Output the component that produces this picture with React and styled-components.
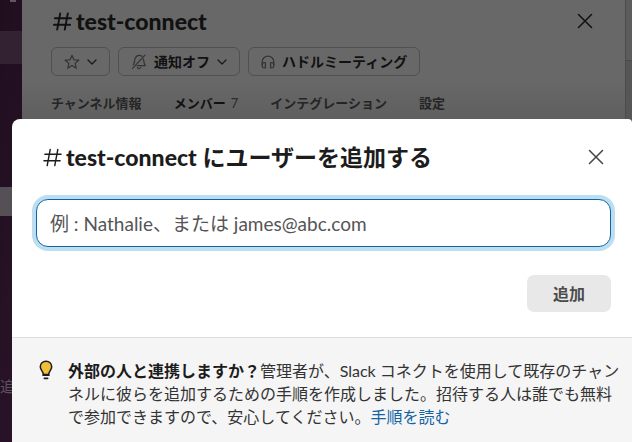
import styled, { createGlobalStyle } from "styled-components"

const tabs = [
  { label: "チャンネル情報" },
  { label: "メンバー", count: 7, active: true },
  { label: "インテグレーション" },
  { label: "設定" },
]

function HashIcon({ size, weight }) {
  return (
    <svg width={size} height={size} viewBox="0 0 20 20" aria-hidden="true">
      <path
        d="M7.6 1.5 4.4 18.5M15.6 1.5 12.4 18.5M2 6.6H19M1 13.4H18"
        fill="none"
        stroke="currentColor"
        strokeWidth={weight}
        strokeLinecap="round"
      />
    </svg>
  )
}

function CloseIcon() {
  return (
    <svg width="16" height="16" viewBox="0 0 16 16" aria-hidden="true">
      <path
        d="M1.5 1.5 14.5 14.5M14.5 1.5 1.5 14.5"
        fill="none"
        stroke="currentColor"
        strokeWidth="1.5"
        strokeLinecap="round"
      />
    </svg>
  )
}

function ChevronIcon() {
  return (
    <svg width="10" height="6" viewBox="0 0 10 6" aria-hidden="true">
      <path
        d="M1 1 5 5 9 1"
        fill="none"
        stroke="#1c1c1c"
        strokeWidth="1.4"
        strokeLinecap="round"
        strokeLinejoin="round"
      />
    </svg>
  )
}

function StarIcon() {
  return (
    <svg width="16" height="16" viewBox="0 0 16 16" aria-hidden="true">
      <path
        d="M8 1.3 9.9 5.8 14.8 6.2 11.1 9.4 12.3 14.3 8 11.6 3.7 14.3 4.9 9.4 1.2 6.2 6.1 5.8Z"
        fill="none"
        stroke="currentColor"
        strokeWidth="1.2"
        strokeLinejoin="round"
      />
    </svg>
  )
}

function BellOffIcon() {
  return (
    <svg width="16" height="16" viewBox="0 0 16 16" aria-hidden="true">
      <g
        fill="none"
        stroke="currentColor"
        strokeWidth="1.2"
        strokeLinecap="round"
        strokeLinejoin="round"
      >
        <path d="M1.6 14.4 14 1.2" />
        <path d="M2.2 10.9C3.6 9.6 3.2 7.6 3.8 5.4 4.5 2.8 6.3 1.4 8.3 1.4 9.4 1.4 10.3 1.8 11 2.4" />
        <path d="M12.4 5.1C13 7.4 12.6 9.2 14.3 11.6H6.2" />
        <path d="M6.4 13.6C6.8 14.9 9.2 14.9 9.8 13.4" />
      </g>
    </svg>
  )
}

function HeadphonesIcon() {
  return (
    <svg width="14" height="14" viewBox="0 0 14 14" aria-hidden="true">
      <g
        fill="none"
        stroke="currentColor"
        strokeWidth="1.2"
        strokeLinejoin="round"
      >
        <path d="M1.2 10.5V6.8C1.2 3.5 3.8 1.1 7 1.1S12.8 3.5 12.8 6.8V10.5" />
        <path d="M1.2 9.4C1.2 8 2.2 7.4 4.4 7.5V12.8C2.2 12.9 1.2 12.3 1.2 10.8Z" />
        <path d="M12.8 9.4C12.8 8 11.8 7.4 9.6 7.5V12.8C11.8 12.9 12.8 12.3 12.8 10.8Z" />
      </g>
    </svg>
  )
}

function BulbIcon() {
  return (
    <svg width="14" height="20" viewBox="0 0 14 20" aria-hidden="true">
      <path
        d="M7 1.2C3.8 1.2 1.3 3.6 1.3 6.7 1.3 9.9 4.2 11.1 4.4 14.6H9.6C9.8 11.1 12.7 9.9 12.7 6.7 12.7 3.6 10.2 1.2 7 1.2Z"
        fill="#f2c037"
        stroke="#1d1c1d"
        strokeWidth="1.5"
        strokeLinejoin="round"
      />
      <path
        d="M4.2 15.2H9.8M5.4 18.3H8.6"
        fill="none"
        stroke="#1d1c1d"
        strokeWidth="1.8"
        strokeLinecap="round"
      />
    </svg>
  )
}

function ChannelPanel() {
  return (
    <Panel>
      <PanelHeader>
        <PanelTitle>
          <HashIcon size={19} weight={2} />
          test-connect
        </PanelTitle>
        <CloseButton aria-label="閉じる">
          <CloseIcon />
        </CloseButton>
      </PanelHeader>
      <Actions>
        <ActionButton aria-label="スター">
          <StarIcon />
          <ChevronIcon />
        </ActionButton>
        <ActionButton>
          <BellOffIcon />
          通知オフ
          <ChevronIcon />
        </ActionButton>
        <ActionButton>
          <HeadphonesIcon />
          ハドルミーティング
        </ActionButton>
      </Actions>
      <Tabs>
        {tabs.map((t) => (
          <Tab key={t.label} $active={t.active}>
            {t.label}
            {t.count && <Count>{t.count}</Count>}
          </Tab>
        ))}
      </Tabs>
    </Panel>
  )
}

function AddUserDialog() {
  return (
    <Dialog role="dialog" aria-labelledby="dialog-title">
      <DialogHeader>
        <DialogTitle id="dialog-title">
          <HashIcon size={19} weight={1.5} />
          <span>
            <ChannelName>test-connect</ChannelName> にユーザーを追加する
          </span>
        </DialogTitle>
        <CloseButton aria-label="閉じる">
          <CloseIcon />
        </CloseButton>
      </DialogHeader>
      <DialogBody>
        <UserInput
          type="text"
          aria-labelledby="dialog-title"
          placeholder="例 : Nathalie、または james@abc.com"
        />
        <AddButton>追加</AddButton>
      </DialogBody>
      <DialogFooter>
        <BulbIcon />
        <Note>
          <strong>外部の人と連携しますか？</strong>
          管理者が、Slack コネクトを使用して既存のチャンネルに彼らを追加するための手順を作成しました。招待する人は誰でも無料で参加できますので、安心してください。
          <NoteLink href="#">手順を読む</NoteLink>
        </Note>
      </DialogFooter>
    </Dialog>
  )
}

function App() {
  return (
    <Page>
      <GlobalStyle />
      <Sidebar>
        <SidebarMark />
        <SidebarRow $height={33} $color="#332332" />
        <SidebarGap />
        <SidebarRow $height={29} $color="#555055" />
        <SidebarText>追</SidebarText>
      </Sidebar>
      <ChannelPanel />
      <Edge>
        <EdgeHeader />
      </Edge>
      <AddUserDialog />
    </Page>
  )
}

const GlobalStyle = createGlobalStyle`
  * {
    box-sizing: border-box;
  }
  body {
    margin: 0;
    font-family: Lato, "Noto Sans CJK JP", sans-serif;
    color: #1d1c1d;
    overflow: hidden;
  }
  button,
  input {
    font-family: inherit;
    margin: 0;
  }
  svg {
    flex-shrink: 0;
  }
`

const Page = styled.div`
  position: relative;
  display: grid;
  grid-template-columns: 22px 1fr 7px;
  min-height: 100vh;
`

const Sidebar = styled.nav`
  display: flex;
  flex-direction: column;
  background: linear-gradient(100deg, #200e1f, #2a1329);
  overflow: hidden;
`

const SidebarMark = styled.div`
  width: 6px;
  height: 2px;
  margin: 0 0 29px 10px;
  background: #62565f;
`

const SidebarRow = styled.div`
  height: ${(p) => p.$height}px;
  background: ${(p) => p.$color};
`

const SidebarGap = styled.div`
  height: 123px;
`

const SidebarText = styled.span`
  margin-top: 160px;
  color: #5d525c;
  font-size: 15px;
  line-height: 20px;
`

const Panel = styled.section`
  background: linear-gradient(#686868 80px, #5f5f5f 119px);
  color: #111111;
`

const PanelHeader = styled.header`
  display: flex;
  align-items: center;
  justify-content: space-between;
  padding: 7px 32px 0 31px;
`

const PanelTitle = styled.h1`
  display: flex;
  align-items: center;
  gap: 4px;
  margin: 0;
  font-size: 23px;
  font-weight: 900;
  line-height: 28px;
`

const CloseButton = styled.button`
  display: flex;
  padding: 0;
  border: 0;
  background: none;
  color: inherit;
`

const Actions = styled.div`
  display: flex;
  gap: 8px;
  padding: 12px 29px 0;
`

const ActionButton = styled.button`
  display: flex;
  align-items: center;
  gap: 7px;
  height: 29px;
  padding: 0 12px;
  border: 1px solid #505050;
  border-radius: 6px;
  background: none;
  color: #111111;
  font-size: 14px;
  font-weight: 700;
  line-height: 20px;
  white-space: nowrap;

  svg:first-child {
    color: #333333;
  }
`

const Tabs = styled.div`
  display: flex;
  gap: 32px;
  padding: 17px 29px 0;
`

const Tab = styled.button`
  padding: 0;
  border: 0;
  background: none;
  color: ${(p) => (p.$active ? "#111111" : "#252525")};
  font-size: 13px;
  font-weight: 700;
  line-height: 20px;
  white-space: nowrap;
`

const Count = styled.span`
  margin-left: 5px;
  color: #2c2c2c;
  font-weight: 400;
`

const Edge = styled.div`
  background: #565656;
  border-left: 1px solid #4c4c4c;
`

const EdgeHeader = styled.div`
  height: 61px;
  background: #5c5c5c;
  border-bottom: 1px solid #4a4a4a;
`

const Dialog = styled.div`
  position: absolute;
  top: 119px;
  right: 0;
  bottom: 0;
  left: 12px;
  display: flex;
  flex-direction: column;
  border-radius: 8px 4px 0 0;
  background: #ffffff;
  overflow: hidden;
`

const DialogHeader = styled.header`
  display: flex;
  align-items: center;
  justify-content: space-between;
  padding: 20px 28px 0 31px;

  button {
    color: #444444;
  }
`

const DialogTitle = styled.h2`
  display: flex;
  align-items: center;
  gap: 4px;
  margin: 0;
  font-size: 23px;
  font-weight: 700;
  line-height: 36px;
`

const ChannelName = styled.span`
  font-weight: 900;
`

const DialogBody = styled.div`
  display: flex;
  flex-direction: column;
  align-items: flex-end;
  gap: 28px;
  padding: 24px 21px 25px 24px;
`

const UserInput = styled.input`
  width: 100%;
  height: 48px;
  padding: 0 13px;
  border: 1px solid #1264a3;
  border-radius: 12px;
  box-shadow: 0 0 0 4px #bbdff0;
  background: #ffffff;
  font-size: 19px;
  outline: none;

  &::placeholder {
    color: #555555;
    opacity: 1;
  }
`

const AddButton = styled.button`
  width: 84px;
  height: 37px;
  padding: 0 0 2px;
  border: 0;
  border-radius: 7px;
  background: #e8e8e8;
  color: #4c4c4c;
  font-size: 16px;
  font-weight: 700;
`

const DialogFooter = styled.footer`
  display: flex;
  flex: 1;
  align-items: flex-start;
  gap: 15px;
  padding: 21px 11px 0 27px;
  border-top: 1px solid #dddddd;
  background: #f5f5f5;

  svg {
    margin-top: 1px;
  }
`

const Note = styled.p`
  margin: 0;
  font-size: 16px;
  line-height: 23px;
  color: #333333;

  strong {
    color: #1d1c1d;
  }
`

const NoteLink = styled.a`
  color: #1264a3;
  text-decoration: none;
`

export default App
